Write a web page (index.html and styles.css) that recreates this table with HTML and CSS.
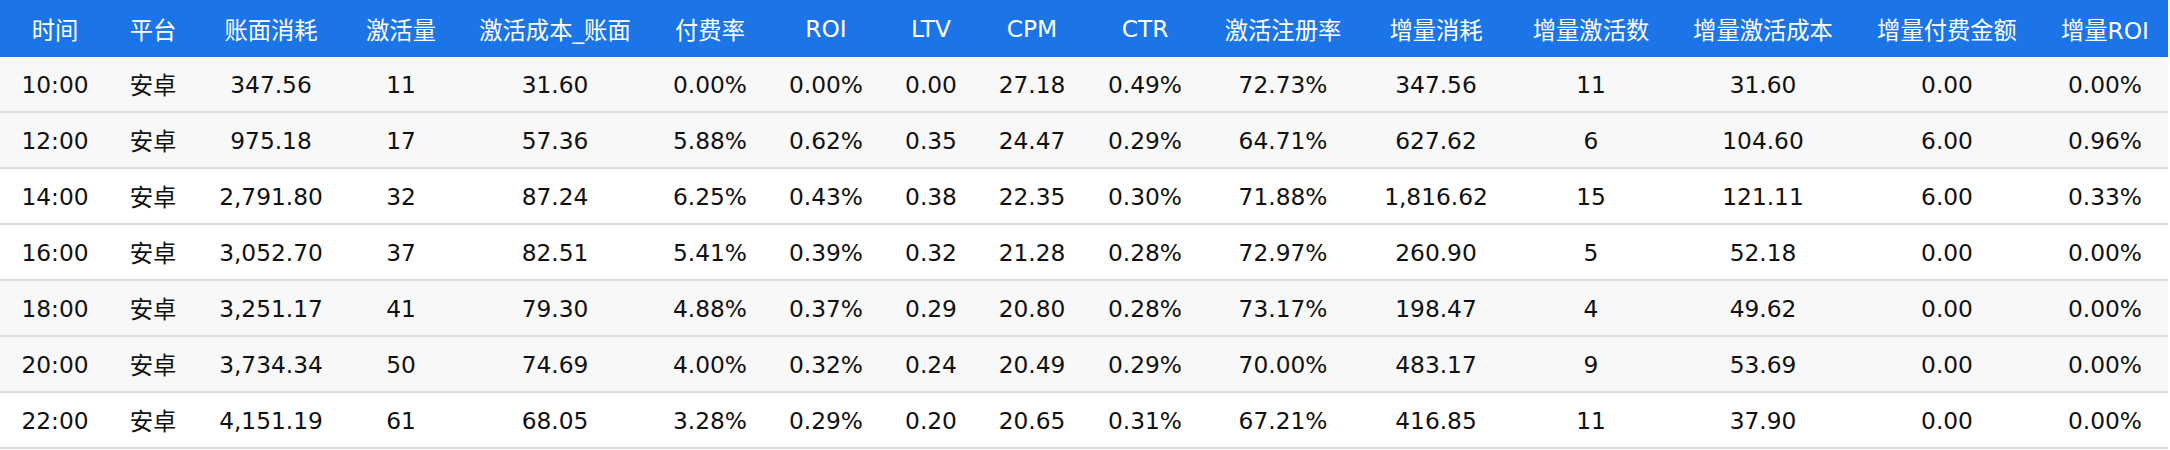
FILE: index.html
```html
<!DOCTYPE html>
<html lang="zh">
<head>
<meta charset="utf-8">
<title>数据表</title>
<link rel="stylesheet" href="styles.css">
</head>
<body>
<table class="report">
  <colgroup>
    <col class="c1"><col class="c2"><col class="c3"><col class="c4"><col class="c5"><col class="c6"><col class="c7"><col class="c8">
    <col class="c9"><col class="c10"><col class="c11"><col class="c12"><col class="c13"><col class="c14"><col class="c15"><col class="c16">
  </colgroup>
  <thead>
    <tr>
      <th>时间</th><th>平台</th><th>账面消耗</th><th>激活量</th><th>激活成本_账面</th><th>付费率</th><th>ROI</th><th>LTV</th>
      <th>CPM</th><th>CTR</th><th>激活注册率</th><th>增量消耗</th><th>增量激活数</th><th>增量激活成本</th><th>增量付费金额</th><th>增量ROI</th>
    </tr>
  </thead>
  <tbody>
    <tr class="shade"><td>10:00</td><td>安卓</td><td>347.56</td><td>11</td><td>31.60</td><td>0.00%</td><td>0.00%</td><td>0.00</td><td>27.18</td><td>0.49%</td><td>72.73%</td><td>347.56</td><td>11</td><td>31.60</td><td>0.00</td><td>0.00%</td></tr>
    <tr class="shade"><td>12:00</td><td>安卓</td><td>975.18</td><td>17</td><td>57.36</td><td>5.88%</td><td>0.62%</td><td>0.35</td><td>24.47</td><td>0.29%</td><td>64.71%</td><td>627.62</td><td>6</td><td>104.60</td><td>6.00</td><td>0.96%</td></tr>
    <tr><td>14:00</td><td>安卓</td><td>2,791.80</td><td>32</td><td>87.24</td><td>6.25%</td><td>0.43%</td><td>0.38</td><td>22.35</td><td>0.30%</td><td>71.88%</td><td>1,816.62</td><td>15</td><td>121.11</td><td>6.00</td><td>0.33%</td></tr>
    <tr><td>16:00</td><td>安卓</td><td>3,052.70</td><td>37</td><td>82.51</td><td>5.41%</td><td>0.39%</td><td>0.32</td><td>21.28</td><td>0.28%</td><td>72.97%</td><td>260.90</td><td>5</td><td>52.18</td><td>0.00</td><td>0.00%</td></tr>
    <tr class="shade"><td>18:00</td><td>安卓</td><td>3,251.17</td><td>41</td><td>79.30</td><td>4.88%</td><td>0.37%</td><td>0.29</td><td>20.80</td><td>0.28%</td><td>73.17%</td><td>198.47</td><td>4</td><td>49.62</td><td>0.00</td><td>0.00%</td></tr>
    <tr class="shade"><td>20:00</td><td>安卓</td><td>3,734.34</td><td>50</td><td>74.69</td><td>4.00%</td><td>0.32%</td><td>0.24</td><td>20.49</td><td>0.29%</td><td>70.00%</td><td>483.17</td><td>9</td><td>53.69</td><td>0.00</td><td>0.00%</td></tr>
    <tr><td>22:00</td><td>安卓</td><td>4,151.19</td><td>61</td><td>68.05</td><td>3.28%</td><td>0.29%</td><td>0.20</td><td>20.65</td><td>0.31%</td><td>67.21%</td><td>416.85</td><td>11</td><td>37.90</td><td>0.00</td><td>0.00%</td></tr>
  </tbody>
</table>
</body>
</html>
```

FILE: styles.css
```css
html, body {
  margin: 0;
  padding: 0;
  background: #ffffff;
}

body {
  font-family: "DejaVu Sans", "Noto Sans CJK SC", sans-serif;
  font-size: 23.3px;
  color: #111111;
}

.report {
  width: 2168px;
  border-collapse: collapse;
  table-layout: fixed;
}

.c1 { width: 110px; }
.c2 { width: 86px; }
.c3 { width: 150px; }
.c4 { width: 110px; }
.c5 { width: 198px; }
.c6 { width: 112px; }
.c7 { width: 120px; }
.c8 { width: 90px; }
.c9 { width: 112px; }
.c10 { width: 114px; }
.c11 { width: 162px; }
.c12 { width: 144px; }
.c13 { width: 166px; }
.c14 { width: 178px; }
.c15 { width: 190px; }
.c16 { width: 126px; }

.report th {
  height: 57px;
  padding: 0;
  background: #1b74e8;
  color: #ffffff;
  font-weight: normal;
  text-align: center;
  white-space: nowrap;
}

.report td {
  height: 54px;
  padding: 0;
  text-align: center;
  white-space: nowrap;
  border-bottom: 2px solid #dedede;
}

.report tr.shade td {
  background: #f8f8f8;
}
```
